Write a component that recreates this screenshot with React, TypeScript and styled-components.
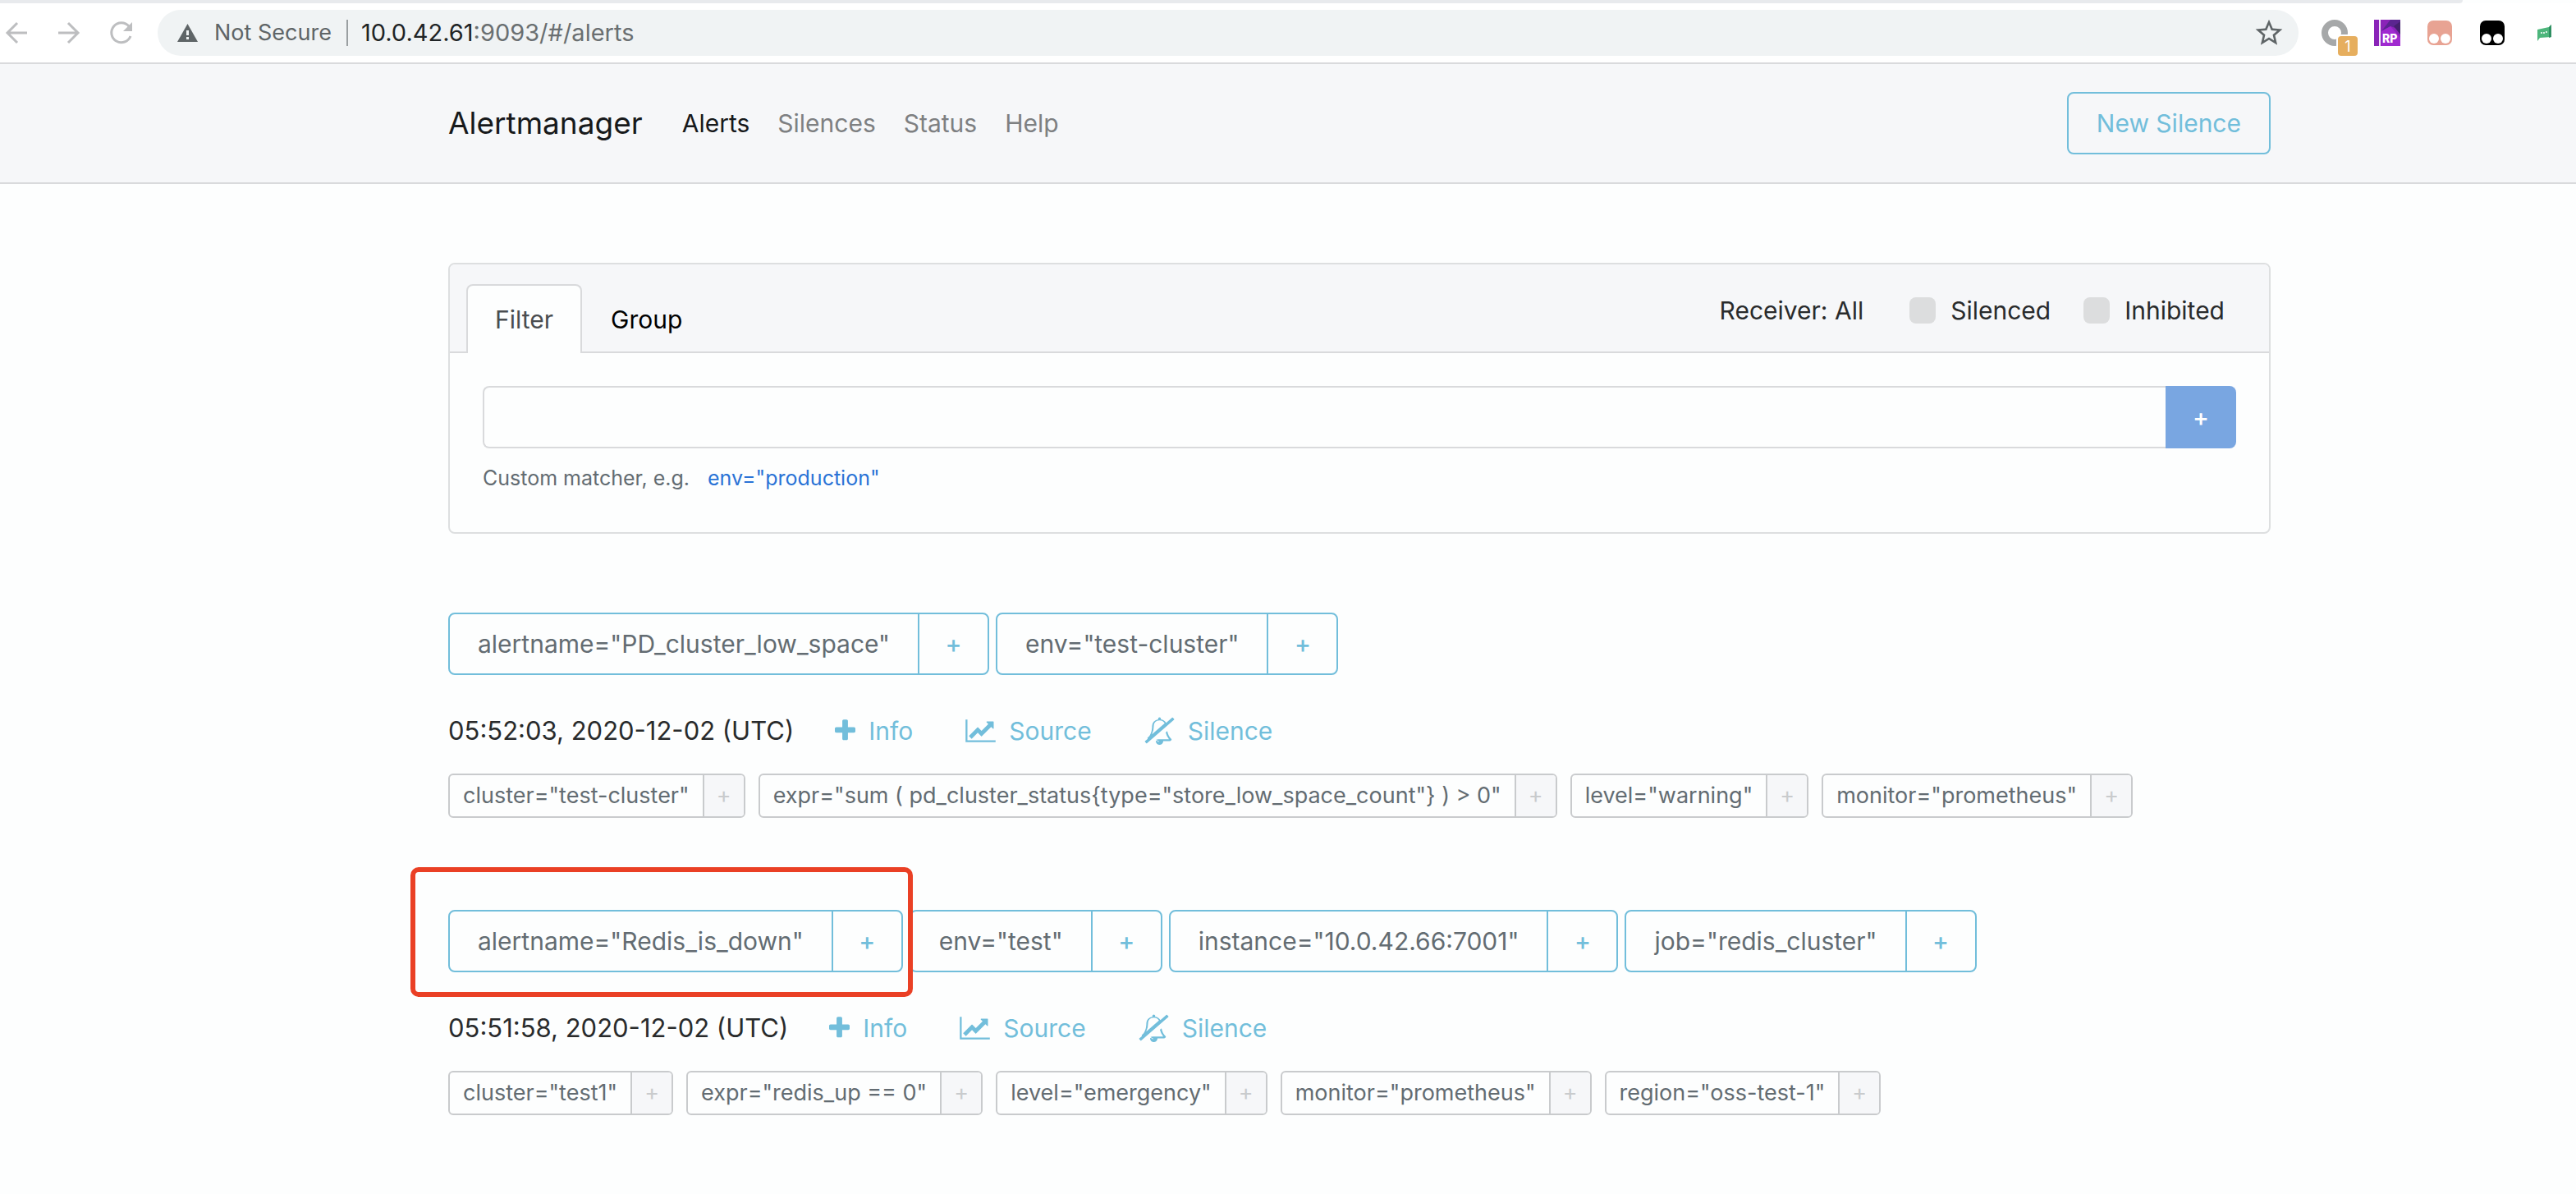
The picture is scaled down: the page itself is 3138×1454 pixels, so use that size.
import React from "react";
import styled, { createGlobalStyle, css } from "styled-components";

const blue = "#72bedb";
const line = "#d9dadc";
const panel = "#f6f7f9";

const GlobalStyle = createGlobalStyle`
  *, *::before, *::after { box-sizing: border-box; }
  body {
    margin: 0;
    background: #fdfefe;
    color: #292b2c;
    font-family: Inter, "Liberation Sans", sans-serif;
    font-size: 30px;
    line-height: 48px;
  }
  button, input { font: inherit; color: inherit; margin: 0; }
  button { padding: 0; border: 0; background: none; cursor: pointer; }
  a { color: inherit; text-decoration: none; }
  svg { display: block; flex: none; }
`;

/* Browser bar */

const TabStrip = styled.div`
  height: 4px;
  margin-right: 138px;
  background: #e8eaed;
  border-bottom-right-radius: 4px;
`;

const Toolbar = styled.div`
  display: flex;
  align-items: center;
  height: 74px;
  padding: 0 22px 0 4px;
  background: #fff;
  border-bottom: 2px solid ${line};
`;

const NavButtons = styled.div`
  display: flex;
  gap: 32px;
  margin-right: 28px;
  color: #bdbec0;
`;

const AddressBar = styled.div`
  display: flex;
  flex: 1;
  align-items: center;
  height: 56px;
  padding: 0 18px 0 24px;
  border-radius: 28px;
  background: #f0f3f4;
  color: #5f6567;
  font-size: 27px;
  white-space: nowrap;
`;

const SecurityNote = styled.span`
  margin-left: 20px;
`;

const AddressDivider = styled.span`
  width: 2px;
  height: 32px;
  margin: 0 16px 0 18px;
  background: #9a9fa1;
`;

const Host = styled.span`
  color: #202426;
`;

const Address = styled.span`
  flex: 1;
  color: #6a6f71;
  font-size: 29px;
`;

const Extensions = styled.div`
  display: flex;
  align-items: center;
  gap: 32px;
  margin-left: 28px;
`;

const ExtensionButton = styled.button`
  position: relative;
  width: 32px;
  height: 32px;
`;

const Badge = styled.span`
  position: absolute;
  left: 20px;
  top: 20px;
  width: 24px;
  height: 24px;
  border-radius: 4px;
  background: #e6ae5e;
  color: #fff;
  font-size: 18px;
  line-height: 26px;
  text-align: center;
  box-shadow: 0 0 0 2px #fff;
`;

/* Application header */

const Header = styled.header`
  background: ${panel};
  border-bottom: 2px solid ${line};
`;

const Container = styled.div`
  padding: 0 372px 0 546px;
`;

const HeaderRow = styled(Container)`
  display: flex;
  align-items: center;
  height: 144px;
`;

const Brand = styled.a`
  margin-right: 48px;
  color: #17191b;
  font-size: 37px;
`;

const Nav = styled.nav`
  display: flex;
  flex: 1;
  gap: 34px;
`;

const NavLink = styled.a<{ $active?: boolean }>`
  color: ${(p) => (p.$active ? "#17191b" : "#7e8082")};
`;

const NewSilence = styled.a`
  display: flex;
  align-items: center;
  height: 76px;
  padding: 0 34px;
  border: 2px solid ${blue};
  border-radius: 8px;
  color: ${blue};
`;

/* Filter card */

const Main = styled(Container).attrs({ as: "main" })`
  padding-top: 96px;
`;

const Card = styled.section`
  margin-bottom: 96px;
  border: 2px solid #dddfe0;
  border-radius: 8px;
`;

const CardHeader = styled.div`
  display: flex;
  justify-content: space-between;
  align-items: flex-start;
  height: 108px;
  padding: 24px 54px 0 20px;
  border-bottom: 2px solid ${line};
  border-radius: 6px 6px 0 0;
  background: ${panel};
`;

const Tabs = styled.div`
  display: flex;
`;

const Tab = styled.button<{ $active?: boolean }>`
  height: 84px;
  padding: 0 33px;
  border: 2px solid transparent;
  border-bottom: 0;
  border-radius: 8px 8px 0 0;
  color: #000;
  ${(p) =>
    p.$active &&
    css`
      border-color: ${line};
      background: #fdfefe;
      color: #4a4d50;
    `}
`;

const Options = styled.div`
  display: flex;
  align-items: center;
  gap: 40px;
  height: 64px;
`;

const Receiver = styled.button`
  margin-right: 16px;
`;

const Option = styled.label`
  display: flex;
  align-items: center;
  gap: 18px;
`;

const Checkbox = styled.input.attrs({ type: "checkbox" })`
  appearance: none;
  width: 32px;
  height: 32px;
  border-radius: 8px;
  background: #dcddde;
`;

const CardBody = styled.div`
  padding: 40px;
`;

const MatcherRow = styled.div`
  display: flex;
  height: 76px;
`;

const MatcherInput = styled.input`
  flex: 1;
  padding: 0 24px;
  border: 2px solid ${line};
  border-right: 0;
  border-radius: 8px 0 0 8px;
  background: transparent;
  outline: 0;
`;

const AddMatcher = styled.button`
  width: 86px;
  border-radius: 0 8px 8px 0;
  background: #79a6e1;
  color: #fff;
  font-weight: 500;
`;

const Hint = styled.p`
  display: flex;
  gap: 22px;
  margin: 16px 0 6px;
  color: #636c72;
  font-size: 25px;
  line-height: 40px;
`;

const HintButton = styled.button`
  color: #2a73d6;
`;

/* Alerts */

const Group = styled.section`
  margin-bottom: 112px;
`;

const GroupLabels = styled.div`
  display: flex;
  flex-wrap: wrap;
  gap: 8px;
`;

const GroupLabel = styled.div`
  position: relative;
  display: flex;
  height: 76px;
  border: 2px solid ${blue};
  border-radius: 8px;
  color: #636c72;
  line-height: 72px;
`;

const GroupText = styled.span`
  padding: 0 34px;
`;

const GroupAdd = styled.button`
  width: 85px;
  border-left: 2px solid ${blue};
  color: ${blue};
  font-weight: 500;
`;

const Highlight = styled.span`
  position: absolute;
  z-index: 1;
  inset: -54px -14px -32px -48px;
  border: 6px solid #ea4025;
  border-radius: 10px;
  pointer-events: none;
`;

const AlertRow = styled.div`
  display: flex;
  align-items: center;
  height: 48px;
  margin: 44px 0 28px;
`;

const StartTime = styled.time`
  font-size: 31px;
`;

const Actions = styled.div`
  display: flex;
  gap: 64px;
  margin-left: 50px;
  color: ${blue};
`;

const actionStyle = css`
  display: flex;
  align-items: center;
  gap: 16px;
`;

const ActionButton = styled.button`
  ${actionStyle}
`;

const ActionLink = styled.a`
  ${actionStyle}
`;

const Labels = styled.div`
  display: flex;
  flex-wrap: wrap;
  gap: 16px;
`;

const Label = styled.div`
  display: flex;
  height: 54px;
  border: 2px solid #c9cbcd;
  border-radius: 6px;
  color: #636c72;
  font-size: 27px;
  line-height: 50px;
`;

const LabelText = styled.span`
  padding: 0 16px;
`;

const LabelAdd = styled.button`
  width: 50px;
  border-left: 2px solid #c9cbcd;
  border-radius: 0 4px 4px 0;
  background: ${panel};
  color: #c9cbcd;
`;

const PlusIcon = () => (
  <svg width="25" height="32" viewBox="192 0 1408 1792" fill="currentColor" aria-hidden="true">
    <path d="M1600 736v192q0 40-28 68t-68 28h-416v416q0 40-28 68t-68 28h-192q-40 0-68-28t-28-68v-416h-416q-40 0-68-28t-28-68v-192q0-40 28-68t68-28h416v-416q0-40 28-68t68-28h192q40 0 68 28t28 68v416h416q40 0 68 28t28 68z" />
  </svg>
);

const ChartIcon = () => (
  <svg width="37" height="32" viewBox="0 0 2048 1792" fill="currentColor" aria-hidden="true">
    <path d="M2048 1536v128h-2048v-1536h128v1408h1920zM1920 288v435q0 21-19.5 29.5t-35.5-7.5l-121-121-633 633q-10 10-23 10t-23-10l-233-233-416 416-192-192 585-585q10-10 23-10t23 10l233 233 464-464-121-121q-16-16-7.5-35.5t29.5-19.5h435q14 0 23 9t9 23z" />
  </svg>
);

const BellSlashIcon = () => (
  <svg width="37" height="34" viewBox="0 0 2048 1920" fill="currentColor" aria-hidden="true">
    <path d="M1009 1696q0-16-16-16-59 0-101.500-42.500t-42.500-101.500q0-16-16-16t-16 16q0 73 51.500 124.500t124.500 51.500q16 0 16-16zM502 1202l877-760q-42-88-132.500-146.500t-223.500-58.500q-93 0-169.500 31.500t-121.500 80.500-69 103-24 105q0 384-137 645zM1856 1536q0 52-38 90t-90 38h-448q0 106-75 181t-181 75-180.500-74.500-75.500-180.500l149-129h757q-166-187-227-459l111-97q61 356 298 556zM1942 51l84 96q8 10 7.500 23.500t-10.500 22.500l-1872 1622q-10 8-23.500 7t-21.500-11l-84-96q-8-10-7.500-23.500t10.500-21.500l186-161q-19-32-19-66 50-42 91-88t85-119.500 74.500-158.500 50-206 19.500-260q0-152 117-282.500t307-158.500q-8-19-8-39 0-40 28-68t68-28 68 28 28 68q0 20-8 39 124 18 219 82.500t148 157.500l418-363q10-8 23.500-7t21.500 11z" />
  </svg>
);

const CatIcon = ({ color }: { color: string }) => (
  <svg width="32" height="32" viewBox="0 0 32 32" aria-hidden="true">
    <rect x="1" y="1" width="30" height="30" rx="7" fill={color} />
    <ellipse cx="9" cy="23" rx="6" ry="6" fill="#fff" />
    <ellipse cx="23" cy="23" rx="6" ry="6" fill="#fff" />
  </svg>
);

const BrowserBar = () => (
  <>
    <TabStrip />
    <Toolbar>
      <NavButtons>
        <button aria-label="Back">
          <svg width="32" height="32" viewBox="0 0 32 32" fill="none" stroke="currentColor" strokeWidth="3">
            <path d="M29 16H5M17 4 5 16l12 12" />
          </svg>
        </button>
        <button aria-label="Forward">
          <svg width="32" height="32" viewBox="0 0 32 32" fill="none" stroke="currentColor" strokeWidth="3">
            <path d="M3 16h24M15 4l12 12-12 12" />
          </svg>
        </button>
        <button aria-label="Reload">
          <svg width="32" height="32" viewBox="0 0 32 32" fill="none" stroke="currentColor" strokeWidth="3">
            <path d="M27 20a12 12 0 1 1-2-12" />
            <path d="M29 3v11H18z" fill="currentColor" stroke="none" />
          </svg>
        </button>
      </NavButtons>
      <AddressBar>
        <svg width="25" height="22" viewBox="0 0 25 22" aria-hidden="true">
          <path d="M12.500 0 25 22H0z" fill="#5f6567" />
          <path d="M11 8h3v6h-3zM11 16h3v3h-3z" fill="#f0f3f4" />
        </svg>
        <SecurityNote>Not Secure</SecurityNote>
        <AddressDivider />
        <Address>
          <Host>10.0.42.61</Host>:9093/#/alerts
        </Address>
        <button aria-label="Bookmark this page">
          <svg width="36" height="36" viewBox="1 1 22 22" fill="#5f6567">
            <path d="M22 9.240l-7.190-.620L12 2 9.190 8.630 2 9.240l5.460 4.730L5.820 21 12 17.270 18.180 21l-1.630-7.030L22 9.240zM12 15.400l-3.760 2.270 1-4.280-3.320-2.880 4.380-.380L12 6.100l1.710 4.040 4.380.380-3.320 2.880 1 4.280L12 15.400z" />
          </svg>
        </button>
      </AddressBar>
      <Extensions>
        <ExtensionButton aria-label="Proxy extension">
          <svg width="32" height="32" viewBox="0 0 32 32">
            <circle cx="16" cy="16" r="12" fill="none" stroke="#a6a8a9" strokeWidth="8" />
          </svg>
          <Badge>1</Badge>
        </ExtensionButton>
        <ExtensionButton aria-label="RP extension">
          <svg width="32" height="32" viewBox="0 0 32 32">
            <rect width="32" height="32" fill="#8a24b8" />
            <path d="M9 14 20 0h12v12L20 8z" fill="#5b2590" />
            <path d="M9 14 20 8l12 14v10H9z" fill="#a02ad0" />
            <path d="M24 8 32 2v16z" fill="#45206f" />
            <rect x="6" width="2" height="32" fill="#f3e6f8" />
            <text x="10" y="28" fontSize="14" fontWeight="800" fill="#fff">RP</text>
          </svg>
        </ExtensionButton>
        <ExtensionButton aria-label="Script manager">
          <CatIcon color="#e8a393" />
        </ExtensionButton>
        <ExtensionButton aria-label="Script manager beta">
          <CatIcon color="#000" />
        </ExtensionButton>
        <ExtensionButton aria-label="Chat extension">
          <svg width="32" height="32" viewBox="0 0 32 32">
            <path d="M7 12 21 9l3-3v15l-14 1-3 4z" fill="#4db67c" />
            <path d="m21 9 3-3v15l-3 1z" fill="#2f8f62" />
            <circle cx="12" cy="16" r="1" fill="#fff" />
            <circle cx="15" cy="16" r="1" fill="#fff" />
            <circle cx="18" cy="15" r="1" fill="#fff" />
          </svg>
        </ExtensionButton>
      </Extensions>
    </Toolbar>
  </>
);

type AlertGroup = { matchers: string[]; time: string; labels: string[]; highlighted?: boolean };

const groups: AlertGroup[] = [
  {
    matchers: ['alertname="PD_cluster_low_space"', 'env="test-cluster"'],
    time: "05:52:03, 2020-12-02 (UTC)",
    labels: [
      'cluster="test-cluster"',
      'expr="sum ( pd_cluster_status{type="store_low_space_count"} ) > 0"',
      'level="warning"',
      'monitor="prometheus"',
    ],
  },
  {
    matchers: ['alertname="Redis_is_down"', 'env="test"', 'instance="10.0.42.66:7001"', 'job="redis_cluster"'],
    time: "05:51:58, 2020-12-02 (UTC)",
    labels: [
      'cluster="test1"',
      'expr="redis_up == 0"',
      'level="emergency"',
      'monitor="prometheus"',
      'region="oss-test-1"',
    ],
    highlighted: true,
  },
];

const AlertGroupView = ({ matchers, time, labels, highlighted }: AlertGroup) => (
  <Group>
    <GroupLabels>
      {matchers.map((m, i) => (
        <GroupLabel key={m}>
          <GroupText>{m}</GroupText>
          <GroupAdd aria-label={`Filter by ${m}`}>+</GroupAdd>
          {highlighted && i === 0 && <Highlight />}
        </GroupLabel>
      ))}
    </GroupLabels>
    <AlertRow>
      <StartTime>{time}</StartTime>
      <Actions>
        <ActionButton>
          <PlusIcon />
          Info
        </ActionButton>
        <ActionLink href="#/source">
          <ChartIcon />
          Source
        </ActionLink>
        <ActionLink href="#/silences/new">
          <BellSlashIcon />
          Silence
        </ActionLink>
      </Actions>
    </AlertRow>
    <Labels>
      {labels.map((l) => (
        <Label key={l}>
          <LabelText>{l}</LabelText>
          <LabelAdd aria-label={`Filter by ${l}`}>+</LabelAdd>
        </Label>
      ))}
    </Labels>
  </Group>
);

export default function App() {
  return (
    <>
      <GlobalStyle />
      <BrowserBar />
      <Header>
        <HeaderRow>
          <Brand href="#/">Alertmanager</Brand>
          <Nav>
            <NavLink href="#/alerts" $active>Alerts</NavLink>
            <NavLink href="#/silences">Silences</NavLink>
            <NavLink href="#/status">Status</NavLink>
            <NavLink href="#/help">Help</NavLink>
          </Nav>
          <NewSilence href="#/silences/new">New Silence</NewSilence>
        </HeaderRow>
      </Header>
      <Main>
        <Card>
          <CardHeader>
            <Tabs role="tablist">
              <Tab role="tab" aria-selected="true" $active>Filter</Tab>
              <Tab role="tab" aria-selected="false">Group</Tab>
            </Tabs>
            <Options>
              <Receiver>Receiver: All</Receiver>
              <Option>
                <Checkbox />
                Silenced
              </Option>
              <Option>
                <Checkbox />
                Inhibited
              </Option>
            </Options>
          </CardHeader>
          <CardBody>
            <MatcherRow>
              <MatcherInput aria-label="Custom matcher" />
              <AddMatcher aria-label="Add matcher">+</AddMatcher>
            </MatcherRow>
            <Hint>
              Custom matcher, e.g.
              <HintButton>env="production"</HintButton>
            </Hint>
          </CardBody>
        </Card>
        {groups.map((g) => (
          <AlertGroupView key={g.time} {...g} />
        ))}
      </Main>
    </>
  );
}
